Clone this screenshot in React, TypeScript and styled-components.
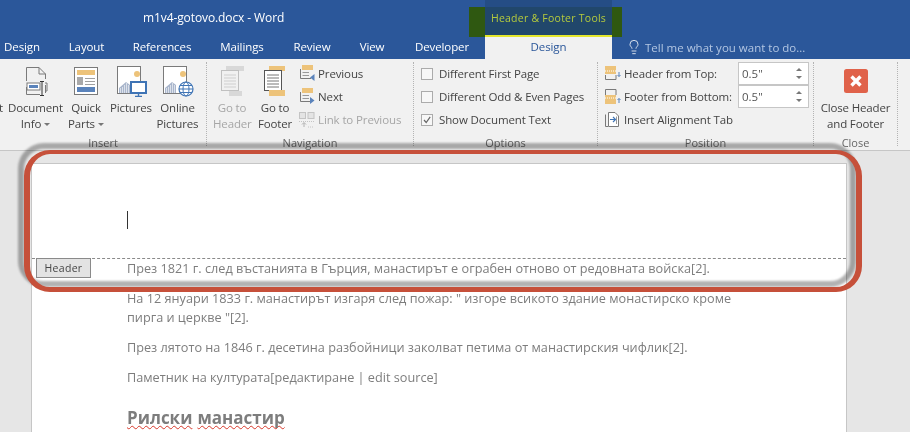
import React from 'react';
import styled, { createGlobalStyle } from 'styled-components';
import { Lightbulb } from 'lucide-react';

const UI_FONT = '"Open Sans", "Noto Sans", sans-serif';
const GREY = '#7a7a7a';
const YELLOW = '#edc37a';
const BLUE = '#5a83bb';

const Global = createGlobalStyle`
  html, body { margin: 0; padding: 0; background: #e6e6e6; }
  body { font-family: ${UI_FONT}; }
`;

const Root = styled.div`
  position: relative;
  width: 910px;
  height: 432px;
  overflow: hidden;
  background: #e6e6e6;
`;

const TitleBar = styled.div`
  isolation: isolate;
  display: flex;
  height: 37px;
  background: #2b579a;
`;

const DocTitle = styled.div`
  width: 342px;
  padding-left: 143px;
  line-height: 36px;
  font-size: 12px;
  letter-spacing: -0.1px;
  color: #fff;
  white-space: nowrap;
`;

const ContextTab = styled.div`
  position: relative;
  box-sizing: border-box;
  width: 127px;
  height: 37px;
  padding-top: 7px;
  border-bottom: 2px solid #e4e62c;
  background: linear-gradient(#254d85 7px, #21476b 7px);
  color: #b5cb3c;
  font-size: 10.5px;
  line-height: 22px;
  letter-spacing: 0.25px;
  text-align: center;
  white-space: nowrap;

  &::before {
    content: '';
    position: absolute;
    z-index: -1;
    top: 7px;
    left: -16px;
    right: -10px;
    bottom: -2px;
    background: #2f5811;
  }
`;

const TabBar = styled.div`
  display: flex;
  height: 22px;
  background: #2b579a;
`;

const Tab = styled.div<{ $width: number; $active?: boolean }>`
  width: ${(p) => p.$width}px;
  line-height: 20px;
  font-size: 11.5px;
  letter-spacing: -0.1px;
  text-align: center;
  color: ${(p) => (p.$active ? '#2b579a' : '#fff')};
  background: ${(p) => (p.$active ? '#f1f1f1' : 'transparent')};
`;

const FirstTab = styled(Tab)`
  padding-right: 10px;
`;

const TellMe = styled.div`
  display: flex;
  align-items: center;
  gap: 3px;
  height: 20px;
  padding-left: 14px;
  font-size: 11.5px;
  color: #b3c6e2;
  white-space: nowrap;
`;

const Ribbon = styled.div`
  display: flex;
  box-sizing: border-box;
  height: 92px;
  background: #f1f1f1;
  border-bottom: 1px solid #c6c6c6;
`;

const Group = styled.div<{ $width: number }>`
  box-sizing: border-box;
  width: ${(p) => p.$width}px;
  height: 84px;
  margin-top: 3px;
  border-right: 1px dotted #b4b4b4;
  display: flex;
  flex-direction: column;
`;

const GroupBody = styled.div<{ $left: number; $gap?: number }>`
  flex: 1;
  display: flex;
  gap: ${(p) => p.$gap ?? 0}px;
  padding-left: ${(p) => p.$left}px;
`;

const GroupLabel = styled.div`
  height: 16px;
  margin-bottom: -5px;
  line-height: 16px;
  font-size: 11px;
  text-align: center;
  color: #666;
`;

const LargeButton = styled.div<{ $width: number; $disabled?: boolean }>`
  flex: none;
  width: ${(p) => p.$width}px;
  font-size: 11.5px;
  line-height: 16px;
  letter-spacing: -0.15px;
  text-align: center;
  white-space: nowrap;
  color: ${(p) => (p.$disabled ? '#a6a6a6' : '#444')};
`;

const IconSlot = styled.div`
  height: 38px;
  display: flex;
  align-items: center;
  justify-content: center;
`;

const Caret = styled.span`
  display: inline-block;
  margin-left: 3px;
  vertical-align: middle;
  border-top: 3px solid #777;
  border-left: 3px solid transparent;
  border-right: 3px solid transparent;
`;

const ClippedButton = styled.div`
  width: 3px;
  margin-left: -7px;
  margin-right: 4px;
  padding-top: 38px;
  overflow: hidden;
  font-size: 11.5px;
  line-height: 16px;
  color: #444;
  direction: rtl;
`;

const SmallColumn = styled.div`
  display: flex;
  flex-direction: column;
`;

const SmallRow = styled.div<{ $disabled?: boolean; $gap?: number }>`
  height: 23px;
  display: flex;
  align-items: center;
  gap: ${(p) => p.$gap ?? 3}px;
  font-size: 11.5px;
  letter-spacing: -0.12px;
  white-space: nowrap;
  color: ${(p) => (p.$disabled ? '#a6a6a6' : '#444')};
`;

const Check = styled.span`
  box-sizing: border-box;
  flex: none;
  width: 12px;
  height: 12px;
  border: 1px solid #ababab;
  background: #f7f7f7;
  display: flex;
`;

const PositionGrid = styled.div`
  display: grid;
  grid-template-columns: 133px 71px;
  grid-auto-rows: 23px;
`;

const Spinner = styled.div`
  box-sizing: border-box;
  height: 23px;
  padding: 0 6px 0 3px;
  border: 1px solid #c6c6c6;
  background: #fff;
  display: flex;
  align-items: center;
  justify-content: space-between;
  font-size: 11.5px;
  color: #555;
`;

const SpinArrows = styled.span`
  display: flex;
  flex-direction: column;
  gap: 5px;
  &::before, &::after {
    content: '';
    border-left: 3px solid transparent;
    border-right: 3px solid transparent;
  }
  &::before { border-bottom: 3px solid #777; }
  &::after { border-top: 3px solid #777; }
`;

const DocArea = styled.div`
  padding: 12px 0 0 31px;
`;

const Page = styled.div`
  box-sizing: border-box;
  width: 816px;
  height: 300px;
  background: #fff;
  border: 1px solid #c6c6c6;
  border-bottom: 0;
  font-size: 12.7px;
  line-height: 19px;
  color: #7d7d7d;
`;

const HeaderZone = styled.div`
  position: relative;
  box-sizing: border-box;
  height: 95px;
  padding: 47px 0 0 95px;
  border-bottom: 1px dashed #8a8a8a;
`;

const TextCursor = styled.div`
  width: 1px;
  height: 18px;
  background: #333;
`;

const HeaderTag = styled.div`
  position: absolute;
  left: 4px;
  top: 94px;
  box-sizing: border-box;
  width: 55px;
  height: 20px;
  border: 1px solid #8a8a8a;
  background: #e3e3e3;
  font-size: 10.5px;
  line-height: 18px;
  letter-spacing: 0.3px;
  text-align: center;
  color: #444;
`;

const PageBody = styled.div`
  padding-left: 95px;
`;

const Para = styled.p`
  margin: 0 0 11px;
  white-space: nowrap;
`;

const Heading = styled.h2`
  margin: 19px 0 0;
  display: flex;
  gap: 5px;
  font-size: 17px;
  line-height: 24px;
  font-weight: 700;
  color: #7d7d7d;
`;

const Misspelt = styled.span`
  text-decoration: underline wavy #d8392b 1px;
  text-decoration-skip-ink: none;
  text-underline-offset: 1px;
`;

const AnnotationShadow = styled.div`
  position: absolute;
  left: 18px;
  top: 143px;
  box-sizing: border-box;
  width: 838px;
  height: 144px;
  border: 6px solid #b2b2b2;
  border-radius: 26px;
  filter: blur(1.3px);
  mix-blend-mode: multiply;
  pointer-events: none;
`;

const Annotation = styled.div`
  position: absolute;
  left: 24px;
  top: 150px;
  box-sizing: border-box;
  width: 838px;
  height: 142px;
  border-style: solid;
  border-color: #c6503a;
  border-width: 4px 6px 5px 6px;
  border-radius: 26px;
  pointer-events: none;
`;

const DocInfoIcon = () => (
  <svg width="24" height="30" viewBox="0 0 24 30" fill="none">
    <path d="M2.5 15V1.5H15L21.5 8V13M15 1.5V8H21.5M21.5 19V27M2.5 21V28.5H16" stroke={GREY} />
    <rect x="3" y="17" width="13" height="7" fill="#fff" stroke={GREY} />
    <rect x="5" y="19" width="9" height="3" fill={BLUE} />
    <path d="M18 16V30M16 15.5H20M16 29.5H20" stroke="#333" />
    <path d="M21 17H23V25H21" stroke={GREY} />
  </svg>
);

const QuickPartsIcon = () => (
  <svg width="24" height="28" viewBox="0 0 24 28" fill="none">
    <rect x="0.5" y="0.5" width="23" height="27" fill="#fff" stroke={GREY} />
    <rect x="3" y="3" width="18" height="5" fill={YELLOW} />
    <rect x="3" y="10" width="6" height="8" fill="#a9a9a9" />
    <path d="M11 11.5H21M11 14.5H21M11 17.5H21" stroke="#a0a0a0" />
    <rect x="3" y="20" width="18" height="5" fill={BLUE} />
  </svg>
);

const Picture = () => (
  <>
    <rect x="1.5" y="1.5" width="23" height="27" fill="#fff" stroke={GREY} />
    <circle cx="21" cy="9" r="3" fill={YELLOW} />
    <path d="M3 28V23L10 17L14 20V28Z" fill="#a9b6cc" />
    <path d="M4.5 23V28M6.5 22V28M8.5 20V28M10.5 18V28M12.5 20V28" stroke="#fff" strokeWidth="0.6" />
  </>
);

const PicturesIcon = () => (
  <svg width="31" height="32" viewBox="0 0 31 32" fill="none">
    <Picture />
    <rect x="15" y="17" width="15" height="11" fill="#fff" stroke="#3f74b5" strokeWidth="2" />
    <path d="M22.5 28V31M19 31.5H26" stroke="#3f74b5" strokeWidth="1.4" />
  </svg>
);

const OnlinePicturesIcon = () => (
  <svg width="32" height="32" viewBox="0 0 32 32" fill="none">
    <Picture />
    <circle cx="24" cy="24" r="7" fill="#fff" stroke="#3f74b5" strokeWidth="1.2" />
    <ellipse cx="24" cy="24" rx="3" ry="7" stroke="#3f74b5" />
    <path d="M17 24H31M18 20.5H30M18 27.5H30" stroke="#3f74b5" />
  </svg>
);

const GoToHeaderIcon = () => (
  <svg width="24" height="30" viewBox="0 0 24 30" fill="none">
    <rect x="6" y="0" width="18" height="5" fill="#d8d8d8" />
    <rect x="1.5" y="4.5" width="17" height="20" fill="#f1f1f1" stroke="#c0c0c0" />
    <path d="M4 9H16M4 12H16M4 15H16M4 18H16M4 21H16" stroke="#cfcfcf" />
    <rect x="9" y="25" width="13" height="5" fill="#d8d8d8" />
  </svg>
);

const GoToFooterIcon = () => (
  <svg width="24" height="30" viewBox="0 0 24 30" fill="none">
    <rect x="6" y="0" width="16" height="5" fill={YELLOW} />
    <rect x="1.5" y="4.5" width="17" height="20" fill="#fff" stroke="#555" />
    <path d="M4 9H16M4 12H16M4 15H16M4 18H16M4 21H16" stroke="#777" />
    <rect x="6" y="24" width="16" height="6" fill={YELLOW} />
  </svg>
);

const PrevNextIcon = ({ next }: { next?: boolean }) => (
  <svg width="16" height="17" viewBox="0 0 16 17" fill="none">
    <rect x="3" y="0" width="11" height="5" fill={YELLOW} />
    <path d="M1.5 4V13.5H12" stroke={GREY} />
    <path d="M3.5 7.5H10M3.5 10.5H10" stroke="#999" />
    <path d={next ? 'M11 9L15.5 12.5L11 16Z' : 'M15.5 9L11 12.5L15.5 16Z'} fill={BLUE} />
  </svg>
);

const LinkPrevIcon = () => (
  <svg width="16" height="16" viewBox="0 0 16 16" fill="none">
    <rect x="0.5" y="0.5" width="6" height="6" fill="#e4e4e4" stroke="#c4c4c4" />
    <rect x="9" y="0.5" width="6" height="6" fill="#e4e4e4" stroke="#c4c4c4" />
    <path d="M5 15V11M3 12.5L5 10.5L7 12.5" stroke="#b0b0b0" />
    <path d="M0 9.5H15M9 15H15" stroke="#c4c4c4" strokeDasharray="1 1" />
  </svg>
);

const HeaderTopIcon = () => (
  <svg width="16" height="15" viewBox="0 0 16 15" fill="none">
    <rect x="0" y="0" width="11" height="8" fill={YELLOW} />
    <path d="M0 5H11" stroke="#fff" strokeDasharray="1 1" />
    <path d="M0.5 9V13.5H11V9" stroke={GREY} />
    <path d="M14 6V10.5M12.5 9L14 10.5L15.5 9" stroke={BLUE} />
  </svg>
);

const FooterBottomIcon = () => (
  <svg width="16" height="15" viewBox="0 0 16 15" fill="none">
    <path d="M0.5 6V0.5H11V6" stroke={GREY} />
    <rect x="0" y="6" width="11" height="9" fill={YELLOW} />
    <path d="M0 9H11" stroke="#fff" strokeDasharray="1 1" />
    <path d="M14 14V9.5M12.5 11L14 9.5L15.5 11" stroke={BLUE} />
  </svg>
);

const AlignTabIcon = () => (
  <svg width="14" height="15" viewBox="0 0 14 15" fill="none">
    <path d="M3.5 0.5H10L13.5 4V14.5H3.5Z" fill="#fff" stroke={GREY} />
    <path d="M0.5 2.5V14.5H3" stroke={GREY} />
    <path d="M5 7.5H10M8 5L10.5 7.5L8 10" stroke="#3f74b5" strokeWidth="1.2" />
    <path d="M11.5 4.5V12" stroke="#999" />
  </svg>
);

const CloseIcon = () => (
  <svg width="24" height="24" viewBox="0 0 24 24">
    <rect width="24" height="24" rx="2.5" fill="#e0624a" />
    <path d="M7.5 7.5L16.5 16.5M16.5 7.5L7.5 16.5" stroke="#fff" strokeWidth="3.4" />
  </svg>
);

const CheckMark = () => (
  <svg width="10" height="10" viewBox="0 0 10 10" fill="none">
    <path d="M2 5L4.2 7.5L8.2 1.8" stroke="#666" strokeWidth="1.2" />
  </svg>
);

export default function App() {
  return (
    <Root>
      <Global />
      <TitleBar>
        <DocTitle>m1v4-gotovo.docx - Word</DocTitle>
        <ContextTab>Header &amp; Footer Tools</ContextTab>
      </TitleBar>
      <TabBar>
        <FirstTab $width={44}>Design</FirstTab>
        <Tab $width={65}>Layout</Tab>
        <Tab $width={86}>References</Tab>
        <Tab $width={74}>Mailings</Tab>
        <Tab $width={66}>Review</Tab>
        <Tab $width={54}>View</Tab>
        <Tab $width={86}>Developer</Tab>
        <Tab $width={127} $active>Design</Tab>
        <TellMe>
          <Lightbulb size={16} color="#fff" strokeWidth={1.2} />
          Tell me what you want to do...
        </TellMe>
      </TabBar>
      <Ribbon>
        <Group $width={207}>
          <GroupBody $left={7}>
            <ClippedButton>t</ClippedButton>
            <LargeButton $width={57}>
              <IconSlot><DocInfoIcon /></IconSlot>
              Document<br />Info<Caret />
            </LargeButton>
            <LargeButton $width={44}>
              <IconSlot><QuickPartsIcon /></IconSlot>
              Quick<br />Parts<Caret />
            </LargeButton>
            <LargeButton $width={46}>
              <IconSlot><PicturesIcon /></IconSlot>
              Pictures
            </LargeButton>
            <LargeButton $width={47}>
              <IconSlot><OnlinePicturesIcon /></IconSlot>
              Online<br />Pictures
            </LargeButton>
          </GroupBody>
          <GroupLabel>Insert</GroupLabel>
        </Group>
        <Group $width={207}>
          <GroupBody $left={6} $gap={5}>
            <LargeButton $width={38} $disabled>
              <IconSlot><GoToHeaderIcon /></IconSlot>
              Go to<br />Header
            </LargeButton>
            <LargeButton $width={38}>
              <IconSlot><GoToFooterIcon /></IconSlot>
              Go to<br />Footer
            </LargeButton>
            <SmallColumn>
              <SmallRow><PrevNextIcon />Previous</SmallRow>
              <SmallRow><PrevNextIcon next />Next</SmallRow>
              <SmallRow $disabled><LinkPrevIcon />Link to Previous</SmallRow>
            </SmallColumn>
          </GroupBody>
          <GroupLabel>Navigation</GroupLabel>
        </Group>
        <Group $width={184}>
          <GroupBody $left={7}>
            <SmallColumn>
              <SmallRow $gap={6}><Check />Different First Page</SmallRow>
              <SmallRow $gap={6}><Check />Different Odd &amp; Even Pages</SmallRow>
              <SmallRow $gap={6}><Check><CheckMark /></Check>Show Document Text</SmallRow>
            </SmallColumn>
          </GroupBody>
          <GroupLabel>Options</GroupLabel>
        </Group>
        <Group $width={216}>
          <GroupBody $left={7}>
            <PositionGrid>
              <SmallRow><HeaderTopIcon />Header from Top:</SmallRow>
              <Spinner>0.5&quot;<SpinArrows /></Spinner>
              <SmallRow><FooterBottomIcon />Footer from Bottom:</SmallRow>
              <Spinner>0.5&quot;<SpinArrows /></Spinner>
              <SmallRow $gap={5}><AlignTabIcon />Insert Alignment Tab</SmallRow>
            </PositionGrid>
          </GroupBody>
          <GroupLabel>Position</GroupLabel>
        </Group>
        <Group $width={84}>
          <GroupBody $left={0}>
            <LargeButton $width={83}>
              <IconSlot><CloseIcon /></IconSlot>
              Close Header<br />and Footer
            </LargeButton>
          </GroupBody>
          <GroupLabel>Close</GroupLabel>
        </Group>
      </Ribbon>
      <DocArea>
        <Page>
          <HeaderZone>
            <TextCursor />
            <HeaderTag>Header</HeaderTag>
          </HeaderZone>
          <PageBody>
            <Para>През 1821 г. след въстанията в Гърция, манастирът е ограбен отново от редовната войска[2].</Para>
            <Para>
              На 12 януари 1833 г. манастирът изгаря след пожар: " изгоре всикото здание монастирско кроме<br />
              пирга и церкве "[2].
            </Para>
            <Para>През лятото на 1846 г. десетина разбойници заколват петима от манастирския чифлик[2].</Para>
            <Para>Паметник на културата[редактиране | edit source]</Para>
            <Heading>
              <Misspelt>Рилски</Misspelt>
              <Misspelt>манастир</Misspelt>
            </Heading>
          </PageBody>
        </Page>
      </DocArea>
      <AnnotationShadow />
      <Annotation />
    </Root>
  );
}
